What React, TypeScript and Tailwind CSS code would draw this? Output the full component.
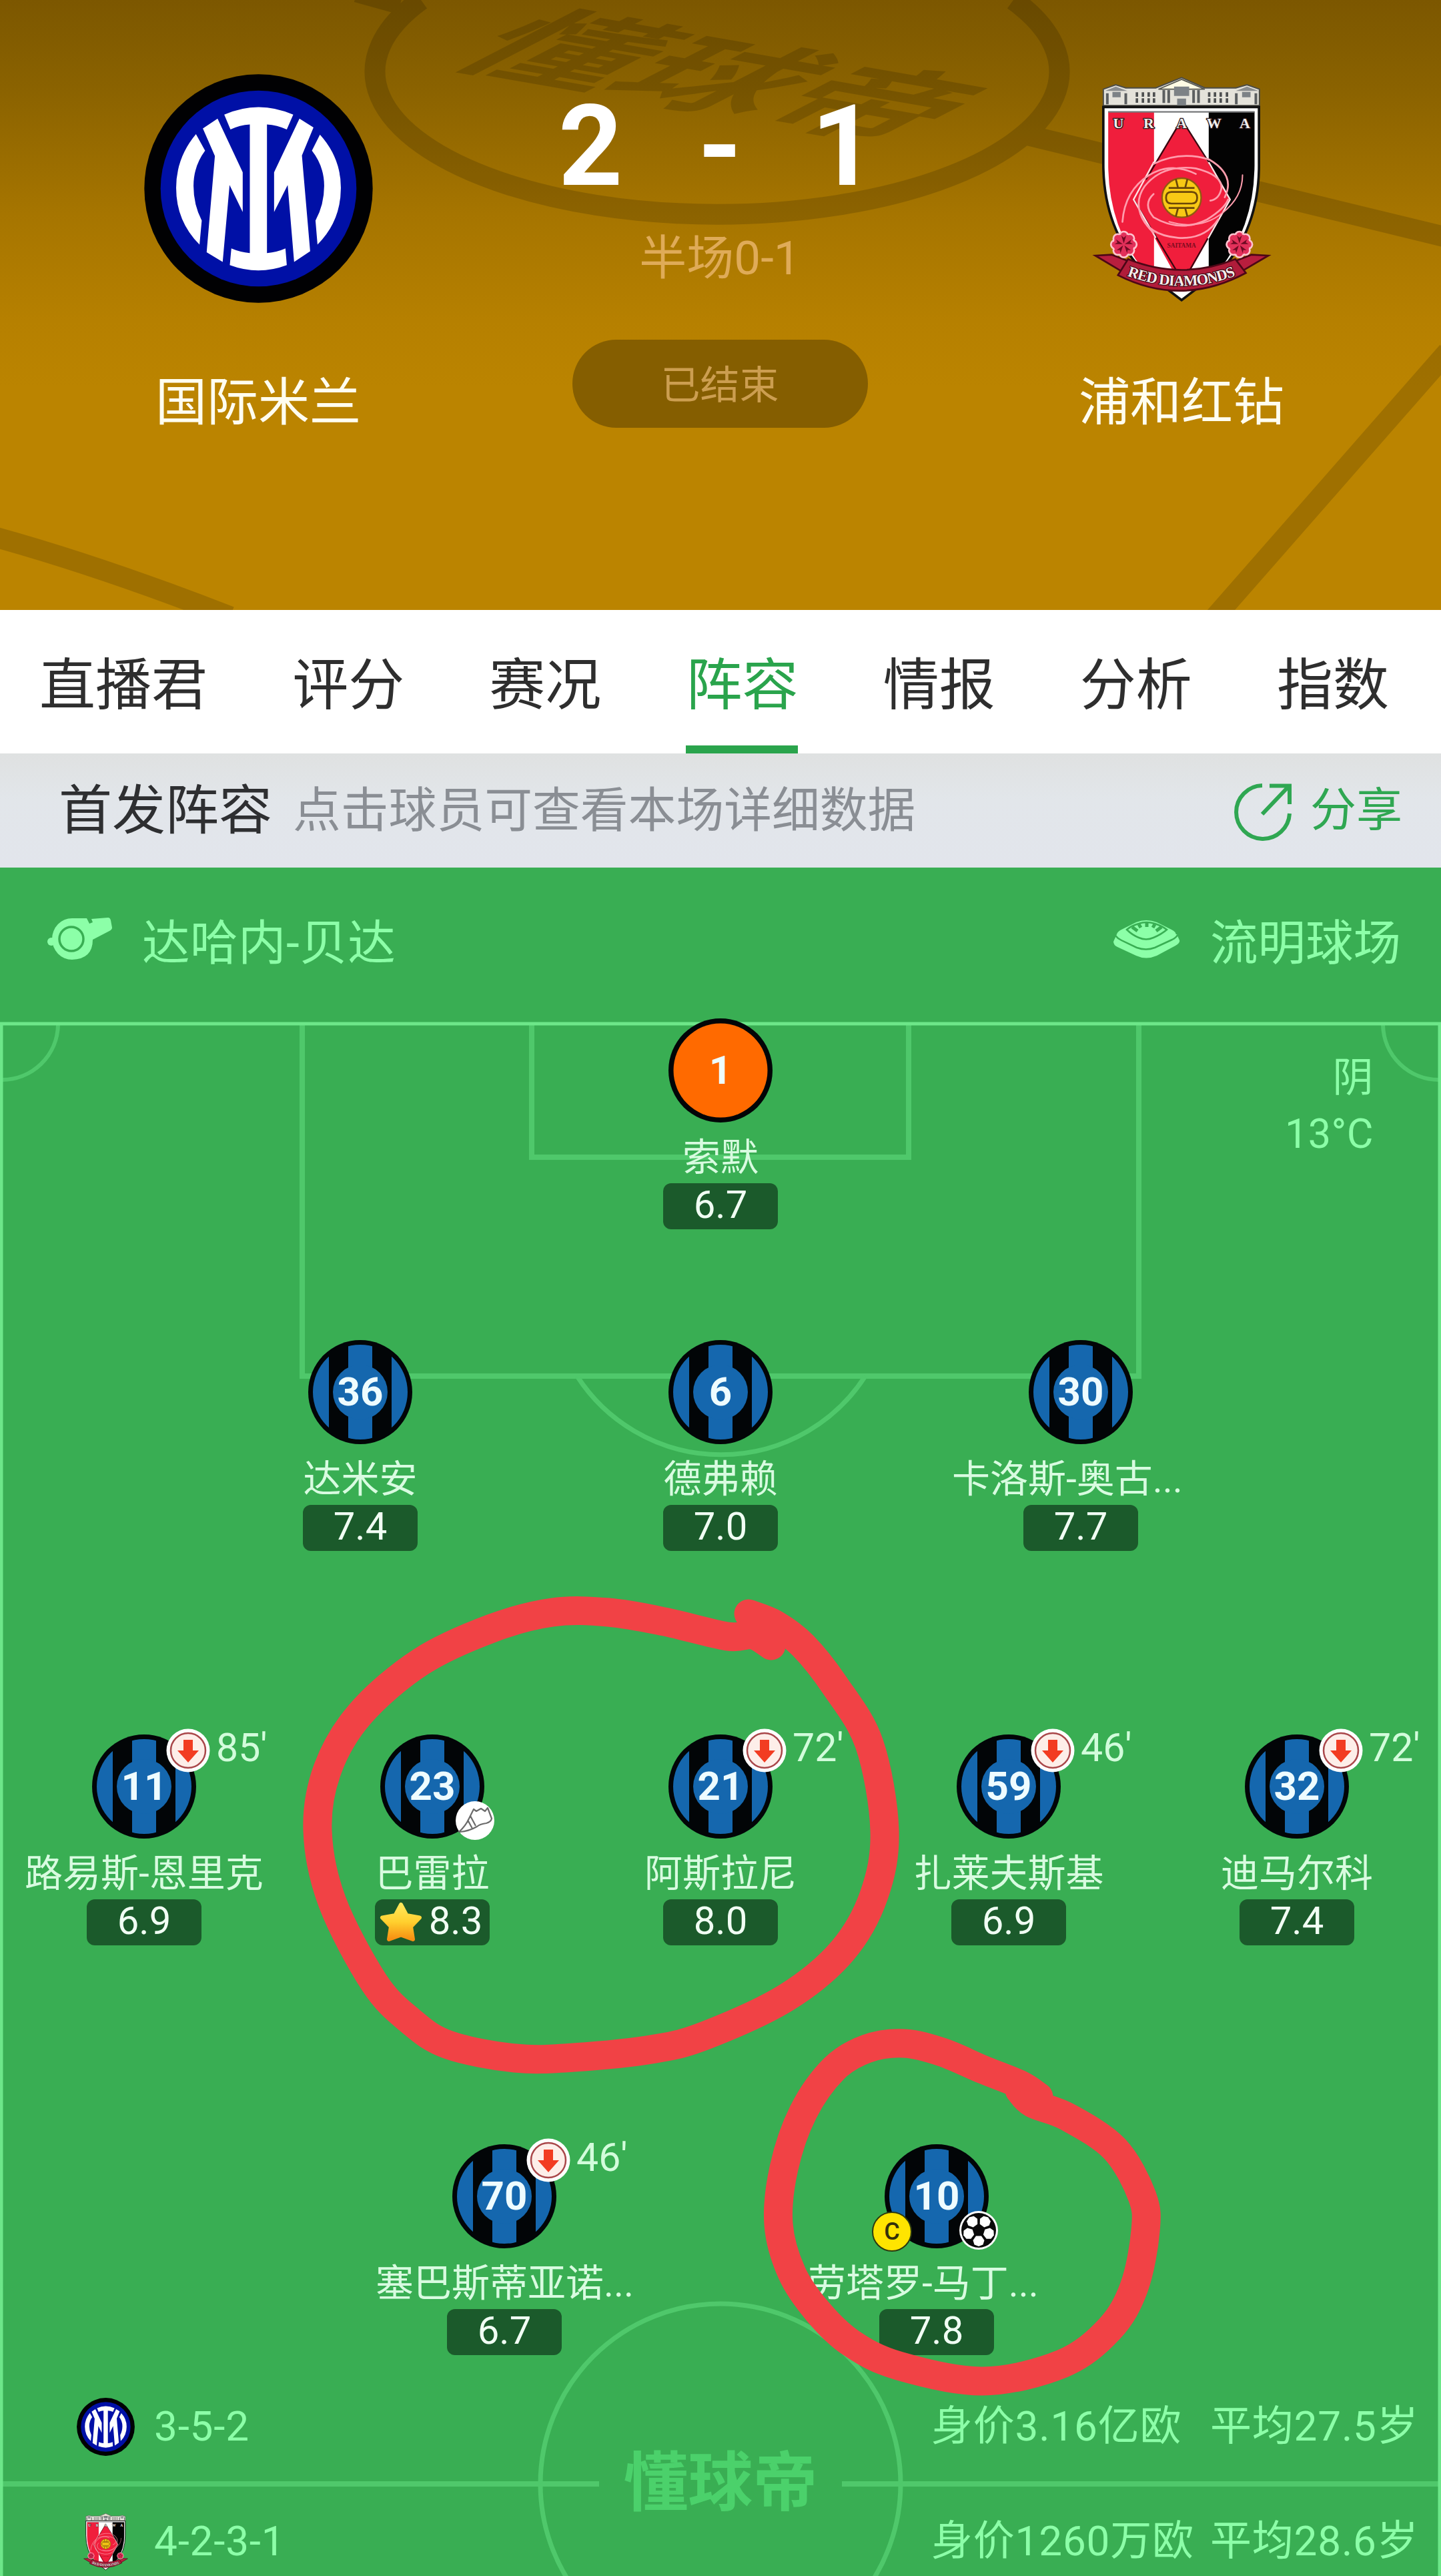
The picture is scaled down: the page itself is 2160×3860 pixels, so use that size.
import React from 'react';

type Badge = 'boot' | 'captain' | 'ball';

interface Player {
  number: number;
  name: string;
  rating: string;
  off?: string;
  badges?: Badge[];
  star?: boolean;
  keeper?: boolean;
  clipped?: boolean;
}

interface Line {
  className: string;
  slot: string;
  players: Player[];
}

const tabs = ['直播君', '评分', '赛况', '阵容', '情报', '分析', '指数'];

const lines: Line[] = [
  {
    className: 'mt-[-8px]',
    slot: 'w-[540px]',
    players: [{ number: 1, name: '索默', rating: '6.7', keeper: true }],
  },
  {
    className: 'mt-[166px]',
    slot: 'w-[540px]',
    players: [
      { number: 36, name: '达米安', rating: '7.4' },
      { number: 6, name: '德弗赖', rating: '7.0' },
      { number: 30, name: '卡洛斯-奥古...', rating: '7.7', clipped: true },
    ],
  },
  {
    className: 'mt-[275px]',
    slot: 'w-[432px]',
    players: [
      { number: 11, name: '路易斯-恩里克', rating: '6.9', off: "85'" },
      { number: 23, name: '巴雷拉', rating: '8.3', badges: ['boot'], star: true },
      { number: 21, name: '阿斯拉尼', rating: '8.0', off: "72'" },
      { number: 59, name: '扎莱夫斯基', rating: '6.9', off: "46'" },
      { number: 32, name: '迪马尔科', rating: '7.4', off: "72'" },
    ],
  },
  {
    className: 'mt-[298px]',
    slot: 'w-[648px]',
    players: [
      { number: 70, name: '塞巴斯蒂亚诺...', rating: '6.7', off: "46'", clipped: true },
      { number: 10, name: '劳塔罗-马丁...', rating: '7.8', badges: ['captain', 'ball'], clipped: true },
    ],
  },
];

const InterLogo = ({ className }: { className: string }) => (
  <svg viewBox="48 64 1028 1028" className={className}>
    <circle cx="562" cy="578" r="513" fill="#010103" />
    <circle cx="562" cy="578" r="440" fill="#0010a6" />
    <g fill="#fff">
      <path d="M408 246Q562 178 718 246L689 313Q645 292 600 290V868Q645 864 683 847L689 922Q562 970 433 922L440 847Q480 864 523 868V290Q478 292 436 313Z" />
      <path d="M312 308L378 264L491 505V684L432 562L401 908L329 864L366 432Z" />
      <path d="M809 304L746 264L632 505V684L693 562L722 908L794 860L757 430Z" />
      <path d="M281 334L322 408Q270 478 270 566Q270 650 307 722L297 830Q192 725 192 575Q192 440 281 334Z" />
      <path d="M838 336L802 408Q857 478 857 566Q857 650 818 722L827 830Q932 725 932 575Q932 440 838 336Z" />
    </g>
  </svg>
);

const Rosette = ({ x }: { x: number }) => (
  <g transform={`translate(${x} 802)`}>
    {[0, 45, 90, 135, 180, 225, 270, 315].map((a) => (
      <circle key={a} cx="0" cy="-38" r="20" fill="#e2305a" stroke="#ffc4cf" strokeWidth="8" transform={`rotate(${a})`} />
    ))}
    <circle r="46" fill="#e2305a" />
    {[0, 72, 144, 216, 288].map((a) => (
      <path key={a} d="M0 -5L-11 -40L0 -30L11 -40Z" fill="#6d0a22" transform={`rotate(${a})`} />
    ))}
  </g>
);

const UrawaLogo = ({ className }: { className: string }) => (
  <svg viewBox="-57.5 36 1029 1029" className={className}>
    {/* station building */}
    <path d="M104 178V104L160 84L205 98H340L456 52L560 98H700L750 84L806 104V178Z" fill="#e4e2da" stroke="#4c4c46" strokeWidth="6" />
    <path d="M352 104L456 60L560 104Z" fill="#fffbe4" stroke="#55564f" strokeWidth="5" />
    <path d="M112 112L160 92L212 112ZM700 112L750 92L802 112Z" fill="#8a8d8e" />
    <path
      d="M255 118V166M282 118V166M308 118V166M332 118V166M580 118V166M606 118V166M632 118V166M660 118V166"
      stroke="#4d4f50"
      strokeWidth="11"
      strokeDasharray="20 7"
    />
    <path d="M122 122V172M205 122V172M376 108V166M398 108V166M510 108V166M532 108V166M702 122V172M790 122V172" stroke="#5b5e60" strokeWidth="12" />
    <path d="M422 92H490V134H422ZM145 116H182V140H145ZM728 116H766V140H728ZM436 146H476V176H436Z" fill="#7d8286" />
    {/* shield */}
    <path d="M104 184H804V440Q806 720 640 912L456 1052L272 912Q104 720 104 440Z" fill="#fff" stroke="#121212" strokeWidth="11" />
    <path d="M126 204H332V918H286Q126 720 126 440Z" fill="#f01e3c" />
    <path d="M578 204H784V440Q784 720 624 918H578Z" fill="#030303" />
    <path d="M126 206H784" stroke="#77787a" strokeWidth="7" />
    <path d="M456 236L674 600L480 948H432L240 600Z" fill="#f01e3c" />
    <path d="M440 268L296 510M474 268L578 432M240 600L432 918M674 600L492 918" stroke="#3a0710" strokeWidth="7" />
    <path d="M332 430L240 600L340 772M578 432L674 600L575 775" fill="none" stroke="#ffe4e6" strokeWidth="7" />
    {/* swirl */}
    <g fill="none" stroke="#ff9dad" strokeWidth="8" strokeLinecap="round">
      <path d="M190 700Q200 560 310 490Q410 430 520 485" />
      <path d="M330 440Q450 380 580 420Q700 490 650 590" />
      <path d="M330 575Q280 620 330 680Q450 750 570 690Q650 640 665 600" />
      <path d="M330 750Q220 640 290 540Q370 440 520 460Q640 490 635 550Q625 600 585 605" />
      <path d="M730 490Q730 590 640 660Q540 740 400 700" strokeWidth="6" />
      <path d="M270 660Q300 760 440 772Q560 780 620 690" />
    </g>
    <circle cx="456" cy="592" r="88" fill="#f8c915" stroke="#8f5a10" strokeWidth="7" />
    <path
      d="M430 508L440 548M482 508L472 548M398 548H514M386 592Q386 566 410 566H502Q526 566 526 592Q526 618 502 618H410Q386 618 386 592ZM398 638H514M430 676L440 638M482 676L472 638"
      fill="none"
      stroke="#6c4708"
      strokeWidth="8"
    />
    <text x="456" y="816" textAnchor="middle" fontSize="28" className="fill-[#7a0c20] font-['Liberation_Serif',serif] font-bold">
      SAITAMA
    </text>
    <g className="fill-[#f0efee] font-['Liberation_Serif',serif] font-bold" stroke="#2a1518" strokeWidth="8" paintOrder="stroke" fontSize="66" textAnchor="middle">
      <text x="172" y="279">U</text>
      <text x="308" y="279">R</text>
      <text x="456" y="279">A</text>
      <text x="602" y="279">W</text>
      <text x="740" y="279">A</text>
    </g>
    {/* ribbon */}
    <path d="M68 852L142 848L225 880L190 925ZM846 852L770 848L688 880L722 925Z" fill="#b81e3e" stroke="#4c0716" strokeWidth="8" />
    <path d="M215 868Q456 965 698 868L745 930Q456 1085 170 940Z" fill="#b01c3a" stroke="#4c0716" strokeWidth="8" />
    <path id="ribbon" d="M190 934Q456 1042 720 934" fill="none" />
    <text fontSize="68" textAnchor="middle" stroke="#3c0712" strokeWidth="7" paintOrder="stroke" className="fill-[#f6ecec] font-['Liberation_Serif',serif] font-bold">
      <textPath href="#ribbon" startOffset="50%" textLength="500">
        RED DIAMONDS
      </textPath>
    </text>
    <Rosette x={196} />
    <Rosette x={716} />
  </svg>
);

const ShareIcon = () => (
  <svg viewBox="0 0 86 88" className="mt-1 h-[88px] w-[86px]" fill="none" stroke="#2fa752" strokeWidth="6">
    <path d="M42 4A40 40 0 1 0 83 46" />
    <path d="M42 47L82 5M53 4.500H83V32" />
  </svg>
);

const WhistleIcon = () => (
  <svg viewBox="0 0 98 64" className="mt-[-8px] h-16 w-[98px]" fill="#8cffa8">
    <circle cx="6" cy="36" r="6" />
    <path d="M37 1H59L63 9L68 7L66 2L91 0Q94 0 95 4L97 15Q97 18 93 20L68 33Q68 62 37 63A30 31 0 0 1 37 1Z" />
    <circle cx="36" cy="32" r="18" fill="none" stroke="#39ae53" strokeWidth="3.500" />
  </svg>
);

const StadiumIcon = () => (
  <svg viewBox="0 0 100 58" className="mt-[-8px] h-[58px] w-[100px]">
    <path d="M5 22L0 33Q0 38 6 41L34 54Q49 61 65 54L93 39Q100 35 99 31L95 22Z" fill="#8cffa8" />
    <path d="M5 22Q6 18 12 15L34 4Q49 -2 65 4L87 15Q94 18 94 24Q93 27 88 29L62 42Q49 47 35 42L10 29Q5 26 5 22Z" fill="#8cffa8" />
    <path d="M3 24Q6 28 12 31L35 42Q49 47 62 42L88 30Q94 27 96 23" fill="none" stroke="#39ae53" strokeWidth="2.500" />
    <path d="M20 15Q28 23 38 27Q49 32 60 27Q72 22 80 15Q72 9 62 6Q49 2 38 6Q27 9 20 15Z" fill="#8cffa8" stroke="#39ae53" strokeWidth="2.500" />
    <path d="M28 11L36 17M38 7L41 12M50 5V11M62 7L59 12M72 11L64 17" stroke="#39ae53" strokeWidth="5" />
  </svg>
);

const Shirt = ({ keeper }: { keeper?: boolean }) => (
  <svg viewBox="0 0 156 156" className="absolute inset-0 h-full w-full">
    <circle cx="78" cy="78" r="78" fill="#020507" />
    {keeper ? (
      <circle cx="78" cy="78" r="70.500" fill="#ff6a00" />
    ) : (
      <>
        <clipPath id="shirt">
          <circle cx="78" cy="78" r="71" />
        </clipPath>
        <g clipPath="url(#shirt)" fill="#1567ae">
          <rect x="0" y="0" width="31" height="156" />
          <rect x="60" y="0" width="36" height="156" />
          <rect x="125" y="0" width="31" height="156" />
          <circle cx="78" cy="78" r="41" />
        </g>
      </>
    )}
  </svg>
);

const badgeIcons: Record<Badge, React.ReactNode> = {
  boot: (
    <svg viewBox="0 0 58 58" className="absolute top-[100px] left-[113px] h-[58px] w-[58px]">
      <circle cx="29" cy="29" r="29" fill="#fff" />
      <path
        d="M5 46Q15 37 20 26L27 12L31 15L38 11L44 15L48 10L54 26Q53 31 46 33Q37 34 32 38Q20 45 6 46ZM18 28L25 41M22 22L30 37"
        fill="#fff"
        stroke="#6b6b6b"
        strokeWidth="2.200"
        strokeLinejoin="round"
      />
    </svg>
  ),
  captain: (
    <span className="absolute top-[101px] left-[-19px] flex h-[60px] w-[60px] items-center justify-center rounded-full border-2 border-[#2c3a10] bg-[#ffe400] text-[36px] leading-none font-medium text-[#33300a]">
      C
    </span>
  ),
  ball: (
    <svg viewBox="0 0 58 58" className="absolute top-[100px] left-[112px] h-[58px] w-[58px]">
      <clipPath id="ball">
        <circle cx="29" cy="29" r="25.500" />
      </clipPath>
      <circle cx="29" cy="29" r="29" fill="#fff" />
      <circle cx="29" cy="29" r="26" fill="#0a0a0a" />
      {/* white panels around the middle patch, joined by thin black seams */}
      <g clipPath="url(#ball)" fill="#fff">
        {[36, 108, 180, 252, 324].map((a) => (
          <path key={a} d="M25 20.500L20.500 14L22.500 7.500L29 5L35.500 7.500L37.500 14L33 20.500Z" transform={`rotate(${a} 29 29)`} />
        ))}
      </g>
      <g stroke="#0a0a0a" strokeWidth="1.500">
        {[0, 72, 144, 216, 288].map((a) => (
          <path key={a} d="M29 20V8" transform={`rotate(${a} 29 29)`} />
        ))}
      </g>
    </svg>
  ),
};

const OffBadge = ({ minute }: { minute: string }) => (
  <div className="absolute top-[-9px] left-[111px] flex items-center">
    <svg viewBox="0 0 66 66" className="h-[66px] w-[66px]">
      <circle cx="33" cy="33" r="32.500" fill="#fff" />
      <circle cx="33" cy="33" r="26" fill="#fdeee9" stroke="#a9474a" strokeWidth="2.500" />
      <path d="M26 17H40V33H49L33 51L17 33H26Z" fill="#f23c22" />
    </svg>
    <span className="mt-[-8px] ml-[9px] text-[59px] leading-[58px] text-[#d2fcdb]">{minute}</span>
  </div>
);

const StarIcon = () => (
  <svg viewBox="0 0 64 60" className="h-[60px] w-16">
    <linearGradient id="star" x1="0" y1="0" x2="0" y2="1">
      <stop offset="0" stopColor="#ffe75a" />
      <stop offset="0.500" stopColor="#ffd02e" />
      <stop offset="1" stopColor="#f78f12" />
    </linearGradient>
    <path
      d="M32 4L40.500 20L60 23.500L47 37L50 56L32 49.500L14 56L17 37L4 23.500L23.500 20Z"
      fill="url(#star)"
      stroke="url(#star)"
      strokeWidth="6"
      strokeLinejoin="round"
    />
  </svg>
);

const PlayerCard = ({ player }: { player: Player }) => (
  <div className="flex flex-col items-center">
    <div className="relative flex h-[156px] w-[156px] items-center justify-center">
      <Shirt keeper={player.keeper} />
      <span className="relative text-[60px] leading-none font-bold text-[#eefcff]">{player.number}</span>
      {player.off && <OffBadge minute={player.off} />}
      {player.badges?.map((badge) => (
        <React.Fragment key={badge}>{badgeIcons[badge]}</React.Fragment>
      ))}
    </div>
    <div
      className={`h-[91px] w-[386px] pt-[7px] text-[57px] leading-[91px] whitespace-nowrap text-[#d8fbe0] ${
        player.clipped ? 'text-left' : 'text-center'
      }`}
    >
      {player.name}
    </div>
    <div className="flex h-[69px] w-[172px] items-center justify-center rounded-xl bg-[#1b5a2b] pb-[5px] text-[58px] leading-[64px] text-[#f1fff4]">
      {player.star && (
        <span className="mt-[3px] mr-[10px] ml-[-4px]">
          <StarIcon />
        </span>
      )}
      {player.rating}
    </div>
  </div>
);

const Team = ({ name, logo }: { name: string; logo: React.ReactNode }) => (
  <div className="flex w-[344px] flex-col items-center">
    {logo}
    <div className="mt-[95px] text-[77px] leading-[110px] whitespace-nowrap text-[#fffdf0]">{name}</div>
  </div>
);

const Header = () => (
  <header className="relative h-[914px] overflow-hidden bg-[linear-gradient(180deg,#7c5700_0px,#8a6200_130px,#a67500_320px,#b68000_480px,#bb8400_580px)]">
    <svg viewBox="0 0 2160 914" className="absolute inset-0 h-full w-full">
      <g fill="none" stroke="#000" strokeWidth="31" opacity="0.150">
        <path d="M631 0A513 214 0 1 0 1519 0" />
        <path d="M1542 203L2170 356M535 -12L600 6" />
        <path d="M-10 804Q150 848 345 924M2170 527L1820 926" />
      </g>
      <text
        transform="matrix(2.3 0.4 -1.98 1.020 664 93)"
        fontSize="100"
        fill="#000"
        fillOpacity="0.150"
        className="font-['Noto_Sans_CJK_SC',sans-serif] font-bold"
      >
        懂球帝
      </text>
    </svg>
    <div className="relative flex justify-between pr-[217px] pl-[215px] pt-[111px]">
      <Team name="国际米兰" logo={<InterLogo className="h-[343px] w-[343px]" />} />
      <div className="flex flex-col items-center">
        <div className="mt-[10px] flex h-[198px] items-center justify-center text-[168px] leading-[198px] font-bold text-white">
          <span className="w-[92px] text-center">2</span>
          <span className="w-[300px] text-center">-</span>
          <span className="w-[92px]">
            <span className="ml-[-13px]">1</span>
          </span>
        </div>
        <div className="mt-[26px] text-[71px] leading-[84px] text-[#dfab58]">半场0-1</div>
        <div className="mt-[80px] flex h-[132px] w-[443px] items-center justify-center rounded-full bg-[#855e00] pt-1 text-[59px] leading-none text-[#cc9e50]">
          已结束
        </div>
      </div>
      <Team name="浦和红钻" logo={<UrawaLogo className="h-[343px] w-[343px]" />} />
    </div>
  </header>
);

const Pitch = () => (
  <section className="relative h-[2560px] bg-[#39ae53]">
    <svg viewBox="0 1300 2160 2560" className="absolute inset-0 h-full w-full" fill="none">
      <g stroke="#4fc86b" strokeWidth="8">
        <path d="M453 1536V2062H1707V1536" />
        <path d="M797 1536V1734H1362V1536" />
        <path d="M865 2062A257 257 0 0 0 1297 2062" strokeWidth="7" />
        <path d="M87 1536A84 84 0 0 1 3 1618M2073 1536A84 84 0 0 0 2157 1618" strokeWidth="6" />
        <circle cx="1080" cy="3722" r="270" strokeWidth="7" />
        <path d="M0 3722H898M1262 3722H2160" />
      </g>
      <path d="M2 3860V1534H2158V3860" stroke="#6de789" strokeWidth="5" />
      <text
        x="1080"
        y="3754"
        textAnchor="middle"
        fontSize="97"
        className="fill-[#4bd16b] font-['Noto_Sans_CJK_SC',sans-serif] font-bold"
      >
        懂球帝
      </text>
    </svg>
    <div className="relative">
      <div className="flex h-[234px] items-center justify-between pr-[60px] pb-3 pl-[71px] text-[71.5px] leading-none text-[#8cffa8]">
        <div className="flex items-center gap-[44px]">
          <WhistleIcon />
          <span className="pt-1.5 tracking-[0.5px]">达哈内-贝达</span>
        </div>
        <div className="flex items-center gap-[45px]">
          <StadiumIcon />
          <span className="pt-1.5">流明球场</span>
        </div>
      </div>
      <div className="absolute top-[273px] right-[101px] text-right text-[61px] leading-[84px] tracking-[0.5px] text-[#8cffa8]">
        <div>阴</div>
        <div>13°C</div>
      </div>
      {lines.map((line) => (
        <div key={line.className} className={`flex justify-center ${line.className}`}>
          {line.players.map((player) => (
            <div key={player.number} className={`flex shrink-0 justify-center ${line.slot}`}>
              <PlayerCard player={player} />
            </div>
          ))}
        </div>
      ))}
      <div className="mt-[61px] text-[62px] leading-[92px] tracking-[0.8px] text-[#8cffa8]">
        <div className="flex items-center pl-[115px]">
          <InterLogo className="h-[87px] w-[87px]" />
          <span className="ml-[29px] w-[1165px]">3-5-2</span>
          <span className="w-[418px]">身价3.16亿欧</span>
          <span>平均27.5岁</span>
        </div>
        <div className="mt-[80px] flex items-center pl-[115px]">
          <UrawaLogo className="h-[87px] w-[87px]" />
          <span className="ml-[29px] w-[1165px]">4-2-3-1</span>
          <span className="w-[418px]">身价1260万欧</span>
          <span>平均28.6岁</span>
        </div>
      </div>
    </div>
  </section>
);

type Point = [number, number];

const strokes: Point[][] = [
  [
    [1122, 2418], [1162, 2434], [1204, 2466], [1251, 2525], [1303, 2613], [1326, 2743], [1310, 2840], [1263, 2923],
    [1179, 2993], [1060, 3049], [982, 3070], [860, 3083], [772, 3084], [672, 3064], [615, 3028], [561, 2971],
    [498, 2850], [476, 2743], [491, 2651], [540, 2568], [631, 2490], [737, 2440], [828, 2416], [912, 2416],
    [996, 2430], [1090, 2452], [1128, 2450], [1156, 2466],
  ],
  [
    [1528, 3132], [1548, 3152], [1600, 3172], [1671, 3220], [1712, 3291], [1717, 3343], [1700, 3427], [1663, 3490],
    [1592, 3542], [1473, 3568], [1347, 3545], [1276, 3511], [1226, 3464], [1187, 3406], [1167, 3333], [1175, 3249],
    [1204, 3165], [1250, 3100], [1299, 3070], [1355, 3062], [1412, 3075], [1473, 3101], [1530, 3124], [1557, 3142],
  ],
];

// Catmull-Rom through the sampled points
const toPath = (points: Point[]) => {
  let d = `M${points[0][0]} ${points[0][1]}`;
  for (let i = 0; i < points.length - 1; i++) {
    const p0 = points[Math.max(i - 1, 0)];
    const p1 = points[i];
    const p2 = points[i + 1];
    const p3 = points[Math.min(i + 2, points.length - 1)];
    d += `C${p1[0] + (p2[0] - p0[0]) / 6} ${p1[1] + (p2[1] - p0[1]) / 6} ${p2[0] - (p3[0] - p1[0]) / 6} ${
      p2[1] - (p3[1] - p1[1]) / 6
    } ${p2[0]} ${p2[1]}`;
  }
  return d;
};

const Markup = () => (
  <svg viewBox="0 0 2160 3860" className="pointer-events-none absolute inset-0 h-full w-full" fill="none">
    {strokes.map((points, index) => (
      <path key={index} d={toPath(points)} stroke="#f14245" strokeWidth="43" strokeLinecap="round" strokeLinejoin="round" />
    ))}
  </svg>
);

const App: React.FC = () => {
  return (
    <div className="relative h-[3860px] w-[2160px] overflow-hidden bg-white font-[Roboto,'Noto_Sans_CJK_SC',sans-serif]">
      <Header />
      <nav className="flex h-[215px] justify-between bg-white pr-[78px] pl-[59px] text-[84px] text-[#2e2e2e]">
        {tabs.map((tab) => (
          <div
            key={tab}
            className={
              tab === '阵容'
                ? 'h-full border-b-[12px] border-[#2aa44c] leading-[227px] text-[#2aa44c]'
                : 'h-full leading-[227px]'
            }
          >
            {tab}
          </div>
        ))}
      </nav>
      <div className="flex h-[171px] items-center bg-[linear-gradient(180deg,#dfe1e1,#e2e6ea_40%,#e2e5ec)] pr-[58px] pl-[88px] leading-none">
        <span className="text-[80px] text-[#2e2f31]">首发阵容</span>
        <span className="ml-[31px] text-[71.8px] text-[#8a8e94]">点击球员可查看本场详细数据</span>
        <div className="ml-auto flex items-center gap-[28px] text-[69px] text-[#2fa752]">
          <ShareIcon />
          <span>分享</span>
        </div>
      </div>
      <Pitch />
      <Markup />
    </div>
  );
};

export default App;
